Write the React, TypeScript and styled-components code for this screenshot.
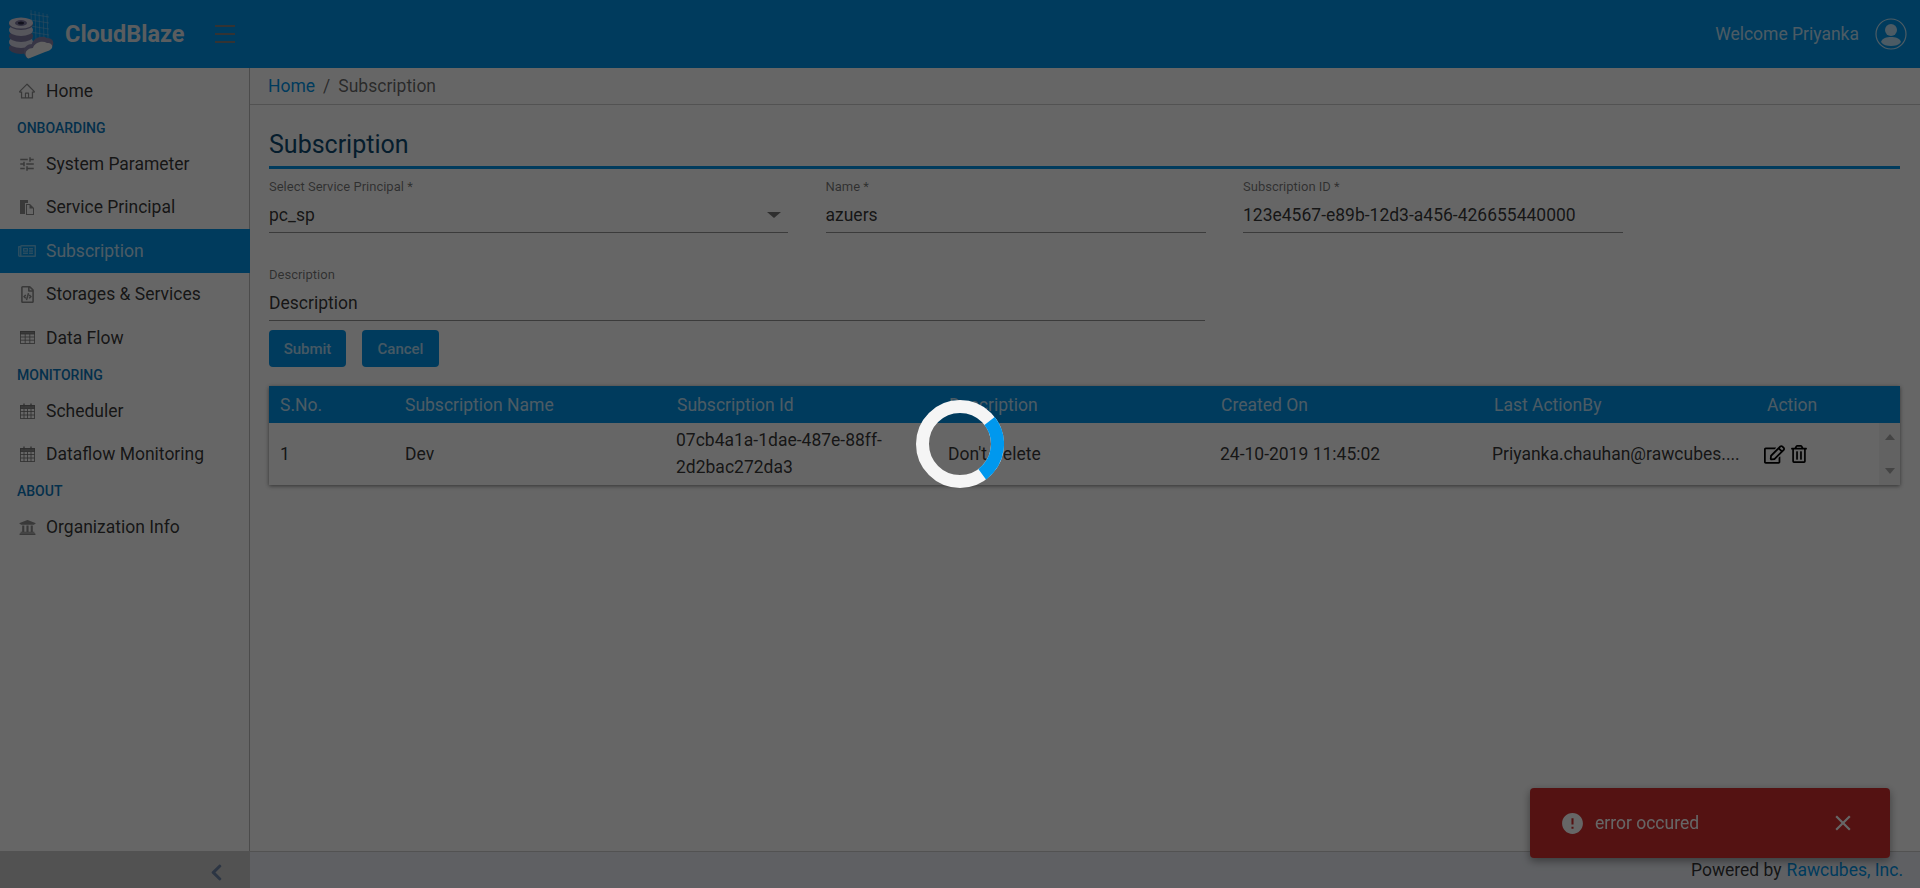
import React from 'react';
import styled, { createGlobalStyle } from 'styled-components';
import { AiOutlineHome } from 'react-icons/ai';
import { MdTune, MdError, MdClose } from 'react-icons/md';
import {
  FaRegNewspaper,
  FaRegFileCode,
  FaUniversity,
  FaRegEdit,
  FaRegTrashAlt,
  FaChevronLeft,
} from 'react-icons/fa';

const PRIMARY = '#0094e8';

const GlobalStyle = createGlobalStyle`
  html, body {
    margin: 0;
    height: 100%;
    overflow: hidden;
    background: #fff;
    font-family: Roboto, 'Liberation Sans', sans-serif;
    color: rgba(0, 0, 0, 0.8);
  }
  * { box-sizing: border-box; }
`;

const Page = styled.div`
  display: flex;
  flex-direction: column;
  height: 100vh;
`;

const Header = styled.header`
  flex: 0 0 68px;
  display: flex;
  align-items: center;
  background: ${PRIMARY};
  padding: 0 13px 0 8px;
`;

const LogoName = styled.span`
  margin-left: 9px;
  width: 119px;
  font-size: 23.5px;
  font-weight: 700;
  white-space: nowrap;
  color: #e2e8ee;
`;

const Burger = styled.span`
  display: flex;
  flex-direction: column;
  gap: 6px;
  margin-left: 31px;
  span {
    display: block;
    width: 20px;
    height: 2px;
    background: #7f7f7f;
  }
`;

const Welcome = styled.span`
  margin-left: auto;
  margin-right: 16px;
  font-size: 17.5px;
  color: rgba(255, 255, 255, 0.75);
`;

const Body = styled.div`
  flex: 1;
  display: flex;
  min-height: 0;
`;

const Sidebar = styled.aside`
  flex: 0 0 250px;
  display: flex;
  flex-direction: column;
  border-right: 1px solid #bbb;
`;

const Nav = styled.nav`
  flex: 1;
  padding-top: 1px;
`;

const Section = styled.div`
  height: 29.5px;
  padding: 7px 0 0 17px;
  font-size: 14px;
  font-weight: 500;
  color: #0a78bd;
`;

const Item = styled.div<{ $active?: boolean }>`
  display: flex;
  align-items: center;
  height: 43.5px;
  padding-left: 18px;
  margin-right: -1px;
  font-size: 17.5px;
  background: ${(p) => (p.$active ? PRIMARY : 'transparent')};
  color: ${(p) => (p.$active ? 'rgba(255,255,255,.75)' : 'rgba(0,0,0,.8)')};
`;

const NavIcon = styled.span`
  display: flex;
  align-items: center;
  justify-content: center;
  flex: 0 0 18px;
  margin-right: 10px;
  opacity: 0.55;
`;

const Collapse = styled.div`
  flex: 0 0 37px;
  display: flex;
  align-items: center;
  justify-content: flex-end;
  padding: 6px 24px 0 0;
  background: #cecece;
  margin-right: -1px;
  font-size: 19px;
  color: #6f86a8;
`;

const Main = styled.main`
  flex: 1;
  display: flex;
  flex-direction: column;
  min-width: 0;
`;

const Crumbs = styled.div`
  flex: 0 0 37px;
  display: flex;
  align-items: center;
  gap: 8px;
  padding-left: 18px;
  border-bottom: 1px solid #ccc;
  font-size: 17.5px;
  color: rgba(0, 0, 0, 0.6);
  a {
    color: ${PRIMARY};
  }
`;

const Content = styled.div`
  flex: 1;
  padding: 20px 20px 0 19px;
`;

const Title = styled.h1`
  margin: 0;
  height: 44px;
  padding-top: 3px;
  border-bottom: 3px solid ${PRIMARY};
  font-size: 25px;
  line-height: 34px;
  font-weight: 400;
  color: #0e4a70;
`;

const FieldRow = styled.div<{ $top: number }>`
  display: flex;
  gap: 37.5px;
  margin-top: ${(p) => p.$top}px;
`;

const Field = styled.div<{ $width: number }>`
  position: relative;
  width: ${(p) => p.$width}px;
  height: 54px;
  border-bottom: 1px solid rgba(0, 0, 0, 0.42);
`;

const FieldLabel = styled.div`
  height: 24px;
  font-size: 13px;
  line-height: 16px;
  color: rgba(0, 0, 0, 0.54);
`;

const FieldValue = styled.div`
  font-size: 17.5px;
  line-height: 24px;
`;

const Caret = styled.span`
  position: absolute;
  right: 7px;
  top: 33px;
  border-left: 7px solid transparent;
  border-right: 7px solid transparent;
  border-top: 6px solid rgba(0, 0, 0, 0.54);
`;

const Buttons = styled.div`
  display: flex;
  gap: 16px;
  margin-top: 9px;
`;

const Button = styled.button`
  width: 77px;
  height: 37px;
  border: 0;
  border-radius: 4px;
  background: ${PRIMARY};
  color: rgba(255, 255, 255, 0.7);
  font: 500 15px Roboto, sans-serif;
`;

const Table = styled.div`
  margin-top: 19px;
  box-shadow: 0 1px 4px rgba(0, 0, 0, 0.5);
`;

const HeadRow = styled.div`
  display: grid;
  grid-template-columns: 125px 272px 272px 272px 273px 273px 1fr;
  align-items: center;
  height: 37px;
  padding-left: 11px;
  background: ${PRIMARY};
  font-size: 17.5px;
  color: rgba(255, 255, 255, 0.75);
`;

const DataRow = styled.div`
  display: flex;
  height: 62px;
`;

const Cells = styled.div`
  flex: 1;
  display: grid;
  grid-template-columns: 125px 271px 272px 272px 272px 272px 1fr;
  align-items: center;
  padding-left: 11px;
  font-size: 17.5px;
  line-height: 27px;
`;

const ActionIcons = styled.div`
  display: flex;
  align-items: center;
  gap: 5px;
  color: #000;
`;

const Scroller = styled.div`
  flex: 0 0 21px;
  display: flex;
  flex-direction: column;
  justify-content: space-between;
  align-items: center;
  padding: 11px 0;
  background: #f5f5f5;
`;

const ScrollArrow = styled.span<{ $down?: boolean }>`
  border-left: 5px solid transparent;
  border-right: 5px solid transparent;
  ${(p) => (p.$down ? 'border-top' : 'border-bottom')}: 6px solid #aaa;
`;

const Footer = styled.footer`
  flex: 0 0 37px;
  display: flex;
  align-items: center;
  justify-content: flex-end;
  padding: 0 17px 0 0;
  background: #edf0f7;
  border-top: 1px solid #ccc;
  font-size: 17.5px;
  a {
    color: ${PRIMARY};
    margin-left: 5px;
  }
`;

const Backdrop = styled.div`
  position: fixed;
  inset: 0;
  z-index: 10;
  background: rgba(0, 0, 0, 0.6);
`;

const Toast = styled.div`
  position: fixed;
  right: 30px;
  bottom: 30px;
  z-index: 5;
  display: flex;
  align-items: center;
  width: 360px;
  height: 70px;
  padding: 0 34px 0 30px;
  border-radius: 4px;
  background: #d32f2f;
  box-shadow: 0 3px 8px rgba(0, 0, 0, 0.4);
  font-size: 17.5px;
  color: #fff;
`;

const ToastText = styled.span`
  flex: 1;
  margin-left: 10px;
`;

const Spinner = styled.svg`
  position: fixed;
  left: 916px;
  top: 400px;
  z-index: 20;
`;

const Logo = () => (
  <svg width="48" height="56" viewBox="0 0 48 56">
    <g stroke="#8fc4ea" strokeWidth=".7" opacity=".7" fill="none">
      <path d="M23 4l1 30M27 5l1 29M31 6l1 28M35 7l1 26M39 8l1 24M22 8l19 3M22 14l19 3M22 20l19 3M22 26l19 3" />
    </g>
    {[42, 36, 30, 24, 18].map((cy, i) => (
      <ellipse key={cy} cx="13" cy={cy} rx="12" ry="6" fill={i % 2 ? '#d8d6e6' : '#7f7ba3'} />
    ))}
    <ellipse cx="13" cy="17" rx="12" ry="5.500" fill="#dcdae8" />
    <ellipse cx="13" cy="17" rx="6" ry="3" fill="#7f7ba3" />
    <ellipse cx="13" cy="17" rx="3" ry="1.500" fill="#2f2c48" />
    <path d="M16 47c-1-6 4-9 8-9 1-6 10-9 15-6 5 0 7 3 6 7-1 3-4 5-8 6l-16 7c-2 1-4-2-5-5z" fill="#8a86ac" />
    <path d="M18 50c-2-5 3-8 7-8 1-5 9-8 14-5 4 0 6 2 5 5-1 2-4 3-7 4l-15 6c-2 1-3 0-4-2z" fill="#f2f2f2" />
  </svg>
);

const AccountIcon = () => (
  <svg width="32" height="32" viewBox="0 0 32 32">
    <circle cx="16" cy="16" r="15" fill="none" stroke="#fff" strokeOpacity=".75" strokeWidth="1.2" />
    <circle cx="16" cy="12" r="6" fill="#fff" fillOpacity=".75" />
    <path d="M6 24c1-4 6-5 10-5s9 1 10 5c-2 3-6 4-10 4s-8-1-10-4z" fill="#fff" fillOpacity=".75" />
  </svg>
);

const CopyDocIcon = () => (
  <svg width="16" height="16" viewBox="0 0 16 16" fill="currentColor">
    <path d="M1 1h8v3h-3v11H1z" />
    <path fillRule="evenodd" d="M7 5h4l4 4v7H7zm1 1v9h6V9.500h-3.500V6z" />
  </svg>
);

const TableIcon = () => (
  <svg width="15" height="13" viewBox="0 0 15 13" fill="none" stroke="currentColor" strokeWidth="1">
    <rect x=".5" y=".5" width="14" height="12" fill="none" />
    <rect x=".5" y=".5" width="14" height="2.500" fill="currentColor" />
    <path d="M.5 6h14M.5 9.200h14M5.200 3v9.500M9.800 3v9.500" />
  </svg>
);

const CalendarIcon = () => (
  <svg width="15" height="16" viewBox="0 0 15 16" fill="none" stroke="currentColor" strokeWidth="1">
    <rect x=".5" y="2.500" width="14" height="13" />
    <rect x=".5" y="2.500" width="14" height="3" fill="currentColor" />
    <path d="M.5 8.500h14M.5 12h14M4 6v9.500M7.500 6v9.500M11 6v9.500" />
    <path d="M4 .5v3M11 .5v3" strokeWidth="1.600" />
  </svg>
);

const columns = ['S.No.', 'Subscription Name', 'Subscription Id', 'Description', 'Created On', 'Last ActionBy', 'Action'];

export default function App() {
  return (
    <Page>
      <GlobalStyle />
      <Header>
        <Logo />
        <LogoName>CloudBlaze</LogoName>
        <Burger>
          <span />
          <span />
          <span />
        </Burger>
        <Welcome>Welcome Priyanka</Welcome>
        <AccountIcon />
      </Header>
      <Body>
        <Sidebar>
          <Nav>
            <Item><NavIcon><AiOutlineHome size={18} /></NavIcon>Home</Item>
            <Section>ONBOARDING</Section>
            <Item><NavIcon><MdTune size={18} /></NavIcon>System Parameter</Item>
            <Item><NavIcon><CopyDocIcon /></NavIcon>Service Principal</Item>
            <Item $active><NavIcon><FaRegNewspaper size={18} /></NavIcon>Subscription</Item>
            <Item><NavIcon><FaRegFileCode size={17} /></NavIcon>Storages &amp; Services</Item>
            <Item><NavIcon><TableIcon /></NavIcon>Data Flow</Item>
            <Section>MONITORING</Section>
            <Item><NavIcon><CalendarIcon /></NavIcon>Scheduler</Item>
            <Item><NavIcon><CalendarIcon /></NavIcon>Dataflow Monitoring</Item>
            <Section>ABOUT</Section>
            <Item><NavIcon><FaUniversity size={17} /></NavIcon>Organization Info</Item>
          </Nav>
          <Collapse><FaChevronLeft /></Collapse>
        </Sidebar>
        <Main>
          <Crumbs>
            <a>Home</a>
            <span>/</span>
            <span>Subscription</span>
          </Crumbs>
          <Content>
            <Title>Subscription</Title>
            <FieldRow $top={10}>
              <Field $width={519}>
                <FieldLabel>Select Service Principal *</FieldLabel>
                <FieldValue>pc_sp</FieldValue>
                <Caret />
              </Field>
              <Field $width={380}>
                <FieldLabel>Name *</FieldLabel>
                <FieldValue>azuers</FieldValue>
              </Field>
              <Field $width={380}>
                <FieldLabel>Subscription ID *</FieldLabel>
                <FieldValue>123e4567-e89b-12d3-a456-426655440000</FieldValue>
              </Field>
            </FieldRow>
            <FieldRow $top={34}>
              <Field $width={936}>
                <FieldLabel>Description</FieldLabel>
                <FieldValue>Description</FieldValue>
              </Field>
            </FieldRow>
            <Buttons>
              <Button>Submit</Button>
              <Button>Cancel</Button>
            </Buttons>
            <Table>
              <HeadRow>
                {columns.map((c) => (
                  <span key={c}>{c}</span>
                ))}
              </HeadRow>
              <DataRow>
                <Cells>
                  <span>1</span>
                  <span>Dev</span>
                  <span>07cb4a1a-1dae-487e-88ff-<br />2d2bac272da3</span>
                  <span>Don't Delete</span>
                  <span>24-10-2019 11:45:02</span>
                  <span>Priyanka.chauhan@rawcubes....</span>
                  <ActionIcons>
                    <FaRegEdit size={21} />
                    <FaRegTrashAlt size={18} />
                  </ActionIcons>
                </Cells>
                <Scroller>
                  <ScrollArrow />
                  <ScrollArrow $down />
                </Scroller>
              </DataRow>
            </Table>
          </Content>
          <Footer>
            Powered by <a>Rawcubes, Inc.</a>
          </Footer>
        </Main>
      </Body>
      <Toast>
        <MdError size={25} />
        <ToastText>error occured</ToastText>
        <MdClose size={26} />
      </Toast>
      <Backdrop />
      <Spinner width="88" height="88" viewBox="0 0 88 88">
        <circle cx="44" cy="44" r="37.500" fill="none" stroke="#f5f5f5" strokeWidth="13" />
        <circle
          cx="44"
          cy="44"
          r="37.500"
          fill="none"
          stroke="#0098ee"
          strokeWidth="13"
          strokeDasharray="60 236"
          transform="rotate(-38 44 44)"
        />
      </Spinner>
    </Page>
  );
}
